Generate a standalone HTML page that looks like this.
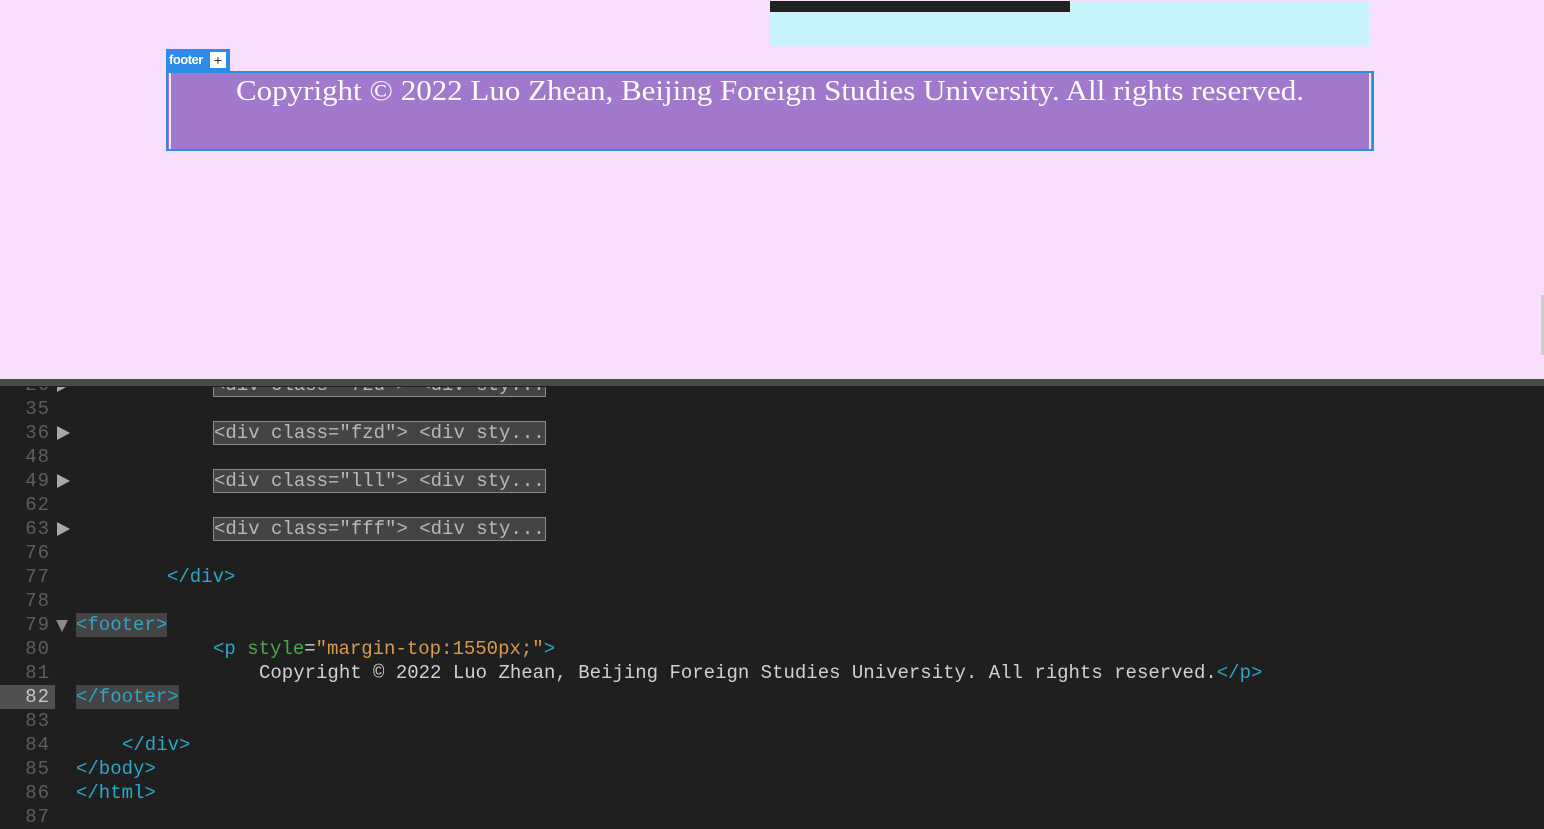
<!DOCTYPE html>
<html><head><meta charset="utf-8"><style>
*{margin:0;padding:0;box-sizing:border-box}
body{width:1544px;height:829px;overflow:hidden;background:#1f1f1f;position:relative;font-family:"Liberation Mono",monospace}
#top{position:absolute;left:0;top:0;width:1544px;height:379px;background:#f8dffc}
#sep{position:absolute;left:0;top:379px;width:1544px;height:7px;background:#4a4a4a}
.code{position:absolute;left:0;top:387px;width:1544px;height:442px;overflow:hidden;background:#1f1f1f}
.row{position:absolute;left:0;height:24px;line-height:24px;font-size:19px;white-space:pre;color:#d0d0d0}
.num{position:absolute;left:0;width:50px;text-align:right;color:#5e5e5e;letter-spacing:1px}
.tx{position:absolute;left:76px}
.t{color:#2ea6c8}.a{color:#4aa84a}.s{color:#d99a4e}.w{color:#d0d0d0}
.fold{position:absolute;left:57px;top:5px;width:0;height:0;border-top:7px solid transparent;border-bottom:7px solid transparent;border-left:13px solid #a8a8a8}
.down{position:absolute;left:56px;top:7px;width:0;height:0;border-left:6px solid transparent;border-right:6px solid transparent;border-top:12px solid #8a8a8a}
.box{border:1px solid #8a8a8a;background:#444;color:#b8b8b8}
.hl{background:#444}
</style></head><body>
<div id="top">
 <div style="position:absolute;left:770px;top:1px;width:600px;height:44px;background:#c8f5fc"></div>
 <div style="position:absolute;left:770px;top:1px;width:300px;height:11px;background:#202020"></div>
 <div style="position:absolute;left:166px;top:49px;width:64px;height:22px;background:#2f8be8"></div>
 <div style="position:absolute;left:169px;top:52px;font:bold 13px 'Liberation Sans',sans-serif;color:#fff;letter-spacing:-0.5px">footer</div>
 <div style="position:absolute;left:210px;top:52px;width:16px;height:16px;background:#fff;color:#333;font:14px/16px 'Liberation Sans',sans-serif;text-align:center">+</div>
 <div style="position:absolute;left:166px;top:71px;width:1208px;height:80px;border:2px solid #2f8be8;background:#a178cb">
  <div style="position:absolute;left:1px;top:0;width:2px;height:76px;background:#f0e8f8"></div>
  <div style="position:absolute;right:1px;top:0;width:2px;height:76px;background:#f0e8f8"></div>
  <svg style="position:absolute;left:0;top:0" width="1204" height="76"><text x="68" y="27" textLength="1068" lengthAdjust="spacingAndGlyphs" font-family="Liberation Serif,serif" font-size="29" fill="#fff">Copyright © 2022 Luo Zhean, Beijing Foreign Studies University. All rights reserved.</text></svg>
 </div>
 <div style="position:absolute;left:1541px;top:295px;width:3px;height:60px;background:#ccc"></div>
</div>
<div id="sep"></div>
<div class="code">
 <div class="row" style="top:-14px"><span class="num">26</span><span class="fold"></span><span class="tx" style="left:213px"><span class="box">&lt;div class="fzd"&gt; &lt;div sty...</span></span></div>
 <div class="row" style="top:10px"><span class="num">35</span></div>
 <div class="row" style="top:34px"><span class="num">36</span><span class="fold"></span><span class="tx" style="left:213px"><span class="box">&lt;div class="fzd"&gt; &lt;div sty...</span></span></div>
 <div class="row" style="top:58px"><span class="num">48</span></div>
 <div class="row" style="top:82px"><span class="num">49</span><span class="fold"></span><span class="tx" style="left:213px"><span class="box">&lt;div class="lll"&gt; &lt;div sty...</span></span></div>
 <div class="row" style="top:106px"><span class="num">62</span></div>
 <div class="row" style="top:130px"><span class="num">63</span><span class="fold"></span><span class="tx" style="left:213px"><span class="box">&lt;div class="fff"&gt; &lt;div sty...</span></span></div>
 <div class="row" style="top:154px"><span class="num">76</span></div>
 <div class="row" style="top:178px"><span class="num">77</span><span class="tx t" style="left:167px">&lt;/div&gt;</span></div>
 <div class="row" style="top:202px"><span class="num">78</span></div>
 <div class="row" style="top:226px"><span class="num">79</span><span class="down"></span><span class="tx t hl">&lt;footer&gt;</span></div>
 <div class="row" style="top:250px"><span class="num">80</span><span class="tx" style="left:213px"><span class="t">&lt;p </span><span class="a">style</span><span class="w">=</span><span class="s">"margin-top:1550px;"</span><span class="t">&gt;</span></span></div>
 <div class="row" style="top:274px"><span class="num">81</span><span class="tx" style="left:259px"><span class="w">Copyright © 2022 Luo Zhean, Beijing Foreign Studies University. All rights reserved.</span><span class="t">&lt;/p&gt;</span></span></div>
 <div class="row" style="top:298px"><span style="position:absolute;left:0;width:55px;height:24px;background:#505050"></span><span class="num" style="color:#c8c8c8">82</span><span class="tx t hl">&lt;/footer&gt;</span></div>
 <div class="row" style="top:322px"><span class="num">83</span></div>
 <div class="row" style="top:346px"><span class="num">84</span><span class="tx t" style="left:122px">&lt;/div&gt;</span></div>
 <div class="row" style="top:370px"><span class="num">85</span><span class="tx t">&lt;/body&gt;</span></div>
 <div class="row" style="top:394px"><span class="num">86</span><span class="tx t">&lt;/html&gt;</span></div>
 <div class="row" style="top:418px"><span class="num">87</span></div>
</div>
</body></html>
